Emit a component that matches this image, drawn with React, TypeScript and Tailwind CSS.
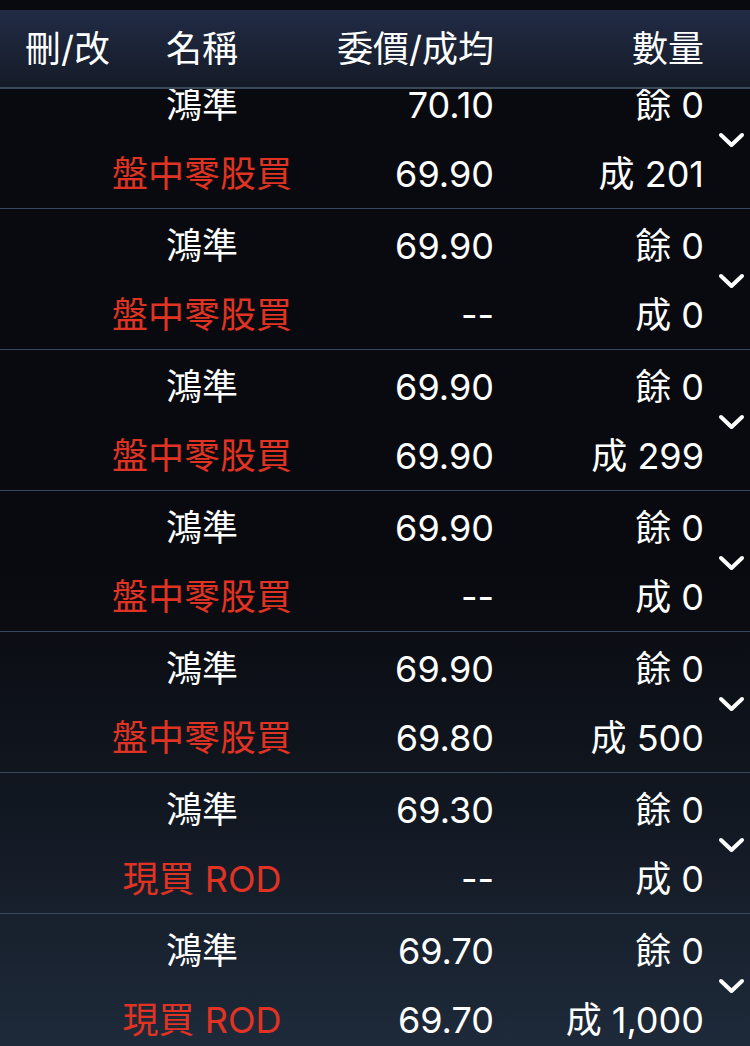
import React from "react";

type Order = {
  name: string;
  type: string;
  price: string;
  avg: string;
  left: string;
  done: string;
};

const orders: Order[] = [
  { name: "鴻準", type: "盤中零股買", price: "70.10", avg: "69.90", left: "餘 0", done: "成 201" },
  { name: "鴻準", type: "盤中零股買", price: "69.90", avg: "--", left: "餘 0", done: "成 0" },
  { name: "鴻準", type: "盤中零股買", price: "69.90", avg: "69.90", left: "餘 0", done: "成 299" },
  { name: "鴻準", type: "盤中零股買", price: "69.90", avg: "--", left: "餘 0", done: "成 0" },
  { name: "鴻準", type: "盤中零股買", price: "69.90", avg: "69.80", left: "餘 0", done: "成 500" },
  { name: "鴻準", type: "現買 ROD", price: "69.30", avg: "--", left: "餘 0", done: "成 0" },
  { name: "鴻準", type: "現買 ROD", price: "69.70", avg: "69.70", left: "餘 0", done: "成 1,000" },
];

const Chevron = () => (
  <svg width="27" height="16" viewBox="0 0 27 16" fill="none">
    <polyline
      points="3,3 13.5,13 24,3"
      stroke="white"
      strokeWidth="4"
      strokeLinecap="round"
      strokeLinejoin="round"
    />
  </svg>
);

const OrderRow: React.FC<{ order: Order }> = ({ order }) => (
  <div className="flex h-[141px] border-b border-[#34495c]">
    <div className="flex flex-col pt-[2px]">
      <div className="flex h-[71px] items-center">
        <div className="w-[112px]" />
        <div className="w-[180px] text-center text-white">{order.name}</div>
        <div className="w-[202px] text-right text-white">{order.price}</div>
        <div className="w-[210px] text-right text-white">{order.left}</div>
      </div>
      <div className="flex h-[71px] items-center">
        <div className="w-[112px]" />
        <div className="w-[180px] whitespace-nowrap text-center text-[#e03323]">{order.type}</div>
        <div className="w-[202px] text-right text-white">{order.avg}</div>
        <div className="w-[210px] text-right text-white">{order.done}</div>
      </div>
    </div>
    <div className="flex flex-1 items-center justify-end pr-[5px] pt-[3px]">
      <Chevron />
    </div>
  </div>
);

export default function App() {
  return (
    <div
      className="flex h-[1046px] w-[750px] flex-col overflow-hidden bg-[linear-gradient(to_bottom,#090a0f_0%,#090a0f_55%,#121822_78%,#1e2a3a_100%)] text-[36px] leading-none"
      style={{ fontFamily: 'Inter, "Noto Sans CJK TC", sans-serif' }}
    >
      <div className="h-[10px] shrink-0 bg-[#090a0f]" />
      <div className="relative z-10 flex h-[79px] shrink-0 items-center border-b-2 border-[#3a4a5a] bg-[linear-gradient(to_bottom,#212b44,#151b28)] text-white">
        <div className="w-[112px] whitespace-nowrap pl-[25px]">刪/改</div>
        <div className="w-[180px] text-center">名稱</div>
        <div className="w-[202px] whitespace-nowrap text-right">委價/成均</div>
        <div className="w-[210px] text-right">數量</div>
      </div>
      <div className="flex-1 overflow-hidden">
        <div className="-mt-[21px]">
          {orders.map((o, i) => (
            <OrderRow key={i} order={o} />
          ))}
        </div>
      </div>
    </div>
  );
}
